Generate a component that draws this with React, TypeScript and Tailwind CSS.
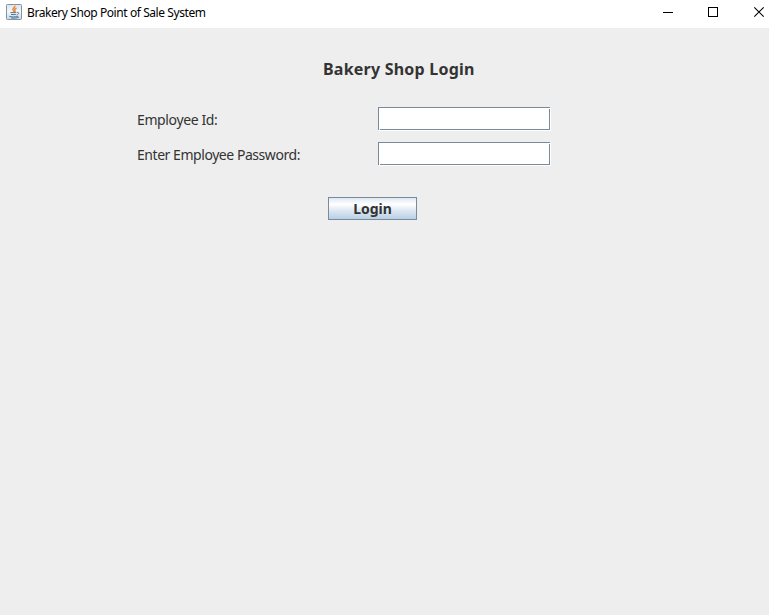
import React from "react";

function JavaIcon() {
  return (
    <svg width="16" height="16" viewBox="0 0 16 16" className="shrink-0">
      <defs>
        <linearGradient id="tile" x1="0" y1="0" x2="0" y2="1">
          <stop offset="0" stopColor="#dde4ea" />
          <stop offset="0.5" stopColor="#f6f8f9" />
          <stop offset="1" stopColor="#c6d6e2" />
        </linearGradient>
      </defs>
      <rect x="0.5" y="0.5" width="15" height="15" rx="0.8" fill="url(#tile)" stroke="#8295a8" />
      <path d="M8.8 1.8c.8 1.8-2.8 2.6-1.9 4.2.3.6 1 .9 1.2 1.8M10.6 4.2C8.8 5 8.2 5.5 8.9 6.4c.4.6.2 1-.3 1.5" fill="none" stroke="#e98432" strokeWidth="1.4" />
      <path d="M4.4 8.6h5.9M5 10.5h4.8M10.8 8.5c2.9-.5 2.2 2-.2 2.5M3.3 12.3c1.8.8 7 .8 8.6 0M5 13.9c2.5.4 6.5.2 7.9-.8" fill="none" stroke="#4f7898" strokeWidth="1" />
    </svg>
  );
}

function TitleBar() {
  return (
    <header className="flex h-[28px] shrink-0 items-start bg-white pl-[6px] pt-[4px]">
      <JavaIcon />
      <span className="ml-[5px] mt-px w-[190px] whitespace-nowrap font-['Noto_Sans',sans-serif] text-[12px] leading-[16px] tracking-[-0.42px] text-black">
        Brakery Shop Point of Sale System
      </span>
      <svg width="108" height="16" viewBox="-4 0 108 16" className="ml-auto" fill="none" stroke="#000">
        <path d="M-2 8.5h10M43.5 3.5h9v9h-9z" shapeRendering="crispEdges" />
        <path d="M89.3 3.3l9.4 9.4M98.7 3.3l-9.4 9.4" strokeWidth="1.1" />
      </svg>
    </header>
  );
}

function Field({ type, label }: { type: string; label: string }) {
  return (
    <div className="grid h-[24px] w-[173px] grid-cols-[1px_1px_169px_1px_1px] grid-rows-[1px_1px_20px_1px_1px] bg-white">
      <i className="col-span-4 col-start-1 row-start-1 bg-[#7a8a99]" />
      <i className="col-start-5 row-start-1 bg-[#eeeeee]" />
      <i className="col-start-1 row-span-4 row-start-1 bg-[#7a8a99]" />
      <i className="col-span-2 col-start-3 row-start-4 bg-[#7a8a99]" />
      <i className="col-start-4 row-span-2 row-start-3 bg-[#7a8a99]" />
      <i className="col-start-1 row-start-5 bg-[#eeeeee]" />
      <input type={type} aria-label={label} className="col-start-3 row-start-3 min-w-0 px-0.5 text-[13px] text-[#333333] outline-none" />
    </div>
  );
}

const labelStyle = "w-[241px] whitespace-nowrap pt-[3px] text-[14px] leading-[20px]";

export default function App() {
  return (
    <div className="flex h-screen w-full flex-col overflow-hidden bg-[#eeeeee]">
      <TitleBar />
      <main className="flex flex-col items-start font-['Noto_Sans',sans-serif] text-[#333333]">
        <h1 className="ml-[323px] mt-[30px] whitespace-nowrap text-[16px] font-bold leading-[22px] tracking-[0.22px]">
          Bakery Shop Login
        </h1>
        <div className="ml-[137px] mt-[27px] flex flex-col gap-[11px]">
          <label className="flex items-start">
            <span className={labelStyle + " tracking-[-0.38px]"}>Employee Id:</span>
            <Field type="text" label="Employee Id" />
          </label>
          <label className="flex items-start">
            <span className={labelStyle + " tracking-[-0.45px]"}>Enter Employee Password:</span>
            <Field type="password" label="Enter Employee Password" />
          </label>
        </div>
        <button className="ml-[328px] mt-[31px] flex h-[23px] w-[89px] items-center justify-center border border-[#7a8a99] bg-[linear-gradient(to_bottom,#dde8f3_0%,#ffffff_30%,#dde8f3_60%,#b8cfe5_100%)] text-[14px] font-bold leading-[20px]">
          Login
        </button>
      </main>
    </div>
  );
}
